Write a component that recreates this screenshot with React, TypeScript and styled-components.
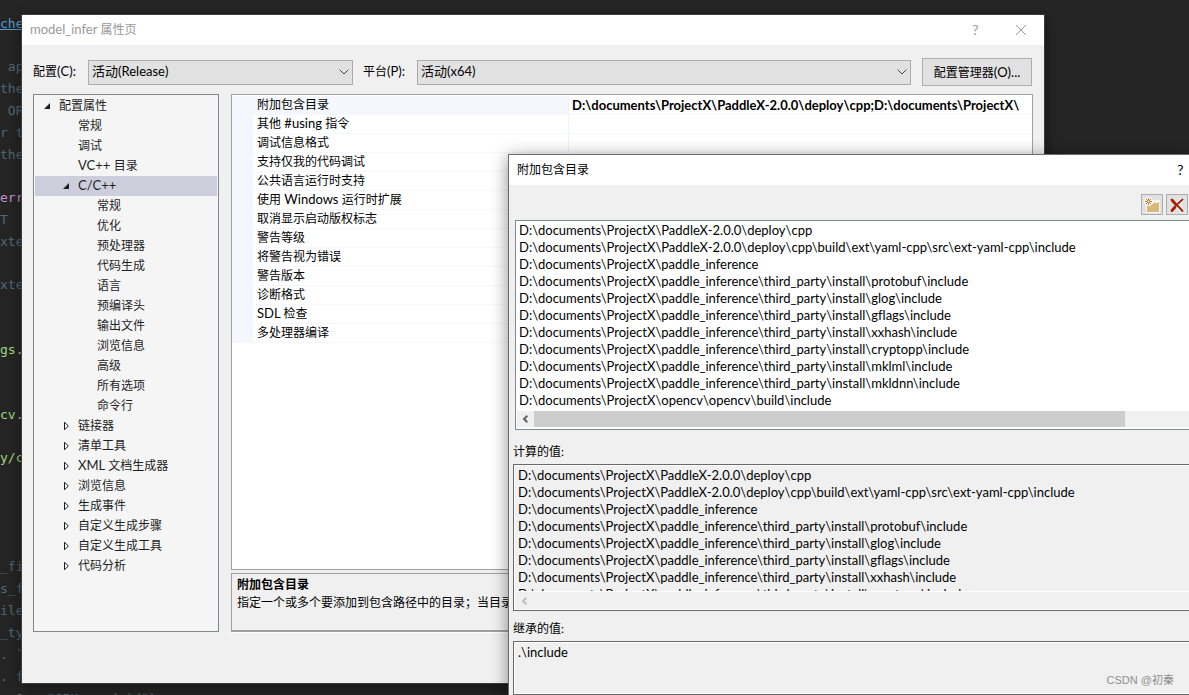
import React from 'react';
import styled, { createGlobalStyle } from 'styled-components';

const UI_FONT = 'Lato, "Noto Sans CJK SC", sans-serif';
const CODE_FONT = '"DejaVu Sans Mono", "Noto Sans CJK SC", monospace';

const GlobalStyle = createGlobalStyle`
  *, *::before, *::after { box-sizing: border-box; }
  body {
    margin: 0;
    background: #252525;
    color: #000;
    font: 12px/20px ${UI_FONT};
    font-variant-ligatures: none;
  }
  ul, h1, h2, p, pre { margin: 0; padding: 0; list-style: none; font-size: inherit; font-weight: inherit; }
  button, select { font-family: inherit; color: inherit; }
`;

/* ---------- desktop and code editor ---------- */

const Desktop = styled.main`
  position: relative;
  height: 100vh;
  overflow: hidden;
`;

const Editor = styled.pre`
  padding-top: 13px;
  font: 13px/22px ${CODE_FONT};
`;

type Tone = 'link' | 'comment' | 'keyword' | 'string';

const tones: Record<Tone, string> = {
  link: '#569cd6',
  comment: '#4f6a78',
  keyword: '#c594c5',
  string: '#a5d67f',
};

const CodeLine = styled.div<{ $tone: Tone }>`
  height: 22px;
  white-space: pre;
  color: ${(p) => tones[p.$tone]};
  text-decoration: ${(p) => (p.$tone === 'link' ? 'underline' : 'none')};
`;

const CodeGap = styled.div<{ $lines: number }>`
  height: ${(p) => p.$lines * 22 - 1}px;
`;

const code: Array<[Tone, string] | number> = [
  ['link', 'che'],
  1,
  ['comment', ' ap'],
  ['comment', 'the'],
  ['comment', ' OR'],
  ['comment', 'r t'],
  ['comment', 'the'],
  1,
  ['keyword', 'err'],
  ['comment', 'T'],
  ['comment', 'xte'],
  1,
  ['comment', 'xte'],
  2,
  ['string', 'gs.'],
  2,
  ['string', 'cv.'],
  1,
  ['string', 'y/c'],
  4,
  ['comment', '_fi'],
  ['comment', 's_f'],
  ['comment', 'ile'],
  ['comment', '_ty'],
  ['comment', '. `'],
  ['comment', '. f'],
  ['comment', '  0,  "GPU card id")'],
];

/* ---------- windows ---------- */

const Window = styled.section`
  position: absolute;
  display: flex;
  flex-direction: column;
  background: #f0f0f0;
`;

const PropertyWindow = styled(Window)`
  top: 15px;
  right: 145px;
  bottom: 12px;
  left: 22px;
  box-shadow: 0 0 0 1px #3c3c3c, 0 4px 14px rgba(0, 0, 0, 0.5);
`;

const IncludeWindow = styled(Window)`
  top: 154px;
  right: 0;
  bottom: 0;
  left: 508px;
  border: solid #6b6b6b;
  border-width: 1px 0 0 1px;
  box-shadow: 0 3px 16px rgba(0, 0, 0, 0.45);
`;

const TitleBar = styled.header<{ $inactive?: boolean }>`
  display: flex;
  align-items: center;
  flex: none;
  height: 30px;
  padding-left: 8px;
  background: #fff;
  color: ${(p) => (p.$inactive ? '#999' : '#000')};
`;

const Title = styled.h1`
  flex: 1;
`;

const CaptionButton = styled.button<{ $width: number }>`
  display: grid;
  place-items: center;
  width: ${(p) => p.$width}px;
  height: 28px;
  padding: 0;
  border: 0;
  background: none;
  color: inherit;
  font-size: 14px;
  line-height: 16px;
`;

const Latin = styled.span`
  font-size: 13px;
  line-height: 1;
`;

/* Latin runs are set one step larger than the Chinese glyphs beside them. */
function Mixed({ text }: { text: string }) {
  const parts = text.split(/([\u2e80-\uffff]+)/).filter(Boolean);
  return (
    <>
      {parts.map((part, i) =>
        /[\u2e80-\uffff]/.test(part) ? part : <Latin key={i}>{part}</Latin>,
      )}
    </>
  );
}

/* ---------- property pages ---------- */

const ConfigBar = styled.div`
  display: flex;
  align-items: center;
  padding: 13px 12px 8px 11px;
`;

const FieldLabel = styled.label<{ $width: number }>`
  flex: none;
  width: ${(p) => p.$width}px;
`;

const SelectBox = styled.div<{ $grow: number }>`
  display: grid;
  flex: ${(p) => p.$grow} 1 0;
  margin-right: 10px;

  > * { grid-area: 1 / 1; }
  > svg {
    align-self: center;
    justify-self: end;
    margin-right: 4px;
    pointer-events: none;
  }
`;

const Select = styled.select`
  width: 100%;
  height: 25px;
  padding: 0 20px 2px 3px;
  appearance: none;
  border: 1px solid #acacac;
  border-radius: 0;
  background: #e1e1e1;
  font-size: 13px;
`;

const PushButton = styled.button`
  flex: none;
  width: 110px;
  height: 28px;
  margin-left: 1px;
  padding: 0 0 2px;
  border: 1px solid #adadad;
  background: #e1e1e1;
  font-size: 12px;
`;

const Panels = styled.div`
  display: grid;
  flex: 1;
  grid-template-columns: 186px minmax(0, 1fr);
  gap: 12px;
  min-height: 0;
  padding: 0 11px 51px;
`;

const Tree = styled.ul`
  padding: 1px;
  border: 1px solid #828790;
  background: #f5f5f5;
  color: #1e1e1e;
`;

const TreeRow = styled.li<{ $level: number; $selected?: boolean }>`
  display: flex;
  align-items: center;
  height: 20px;
  padding-left: ${(p) => 8 + p.$level * 19}px;
  background: ${(p) => (p.$selected ? '#cccedb' : 'transparent')};
  white-space: pre;
`;

const Twisty = styled.svg`
  flex: none;
  width: 16px;
  height: 10px;
`;

const Details = styled.div`
  display: flex;
  flex-direction: column;
  gap: 3px;
  min-width: 0;
`;

const GridFrame = styled.div`
  flex: 1;
  padding-top: 1px;
  overflow: hidden;
  border: 1px solid #a0a0a0;
  background: #fff;
`;

const PropertyTable = styled.table`
  width: 100%;
  table-layout: fixed;
  border-collapse: separate;
  border-spacing: 0;
`;

const GutterCell = styled.td`
  width: 21px;
  padding: 0;
  background: #f4f7fc;
`;

const NameCell = styled.th<{ $selected: boolean }>`
  width: 316px;
  height: 19px;
  padding: 0 0 0 4px;
  border-right: 1px solid #f0f2f7;
  border-bottom: 1px solid #f4f7fc;
  background: ${(p) => (p.$selected ? '#f4f7fc' : '#fff')};
  font-weight: 400;
  line-height: 18px;
  text-align: left;
  white-space: pre;
`;

const ValueCell = styled.td`
  padding: 0 0 0 3px;
  overflow: hidden;
  border-bottom: 1px solid #f4f7fc;
  font-size: 13px;
  font-weight: 700;
  line-height: 18px;
  white-space: nowrap;
`;

const Description = styled.div`
  height: 59px;
  padding: 2px 5px;
  overflow: hidden;
  border: 1px solid #a0a0a0;
  border-bottom-width: 2px;
  box-shadow: 0 1px #fff;
  line-height: 18px;
  white-space: nowrap;
`;

const DescriptionTitle = styled.h2`
  font-weight: 700;
`;

/* ---------- include directories ---------- */

const Toolbar = styled.div`
  display: flex;
  justify-content: flex-end;
  gap: 3px;
  flex: none;
  padding: 9px 1px 5px;
`;

const ToolButton = styled.button`
  display: grid;
  place-items: center;
  width: 22px;
  height: 21px;
  padding: 0;
  border: 1px solid #adadad;
  background: #e1e1e1;
`;

const DirectoryList = styled.div`
  flex: none;
  margin-left: 6px;
  padding: 0 0 2px 1px;
  border: solid #828790;
  border-width: 1px 0 1px 1px;
  background: #fff;
`;

const ReadOnlyList = styled.div<{ $fill?: boolean }>`
  display: flex;
  flex: ${(p) => (p.$fill ? '1 0 0' : 'none')};
  flex-direction: column;
  height: ${(p) => (p.$fill ? 'auto' : '147px')};
  margin-left: 4px;
  padding: 1px 0 1px 2px;
  overflow: hidden;
  border: solid #696969;
  border-width: 1px 0 1px 1px;
  box-shadow: inset 1px 1px #fff, inset 0 -1px #fff;
`;

const Lines = styled.ul`
  flex: 1;
  min-height: 0;
  padding: 1px 0 2px 2px;
  overflow: hidden;
  font-size: 13px;
  line-height: 17px;
  white-space: nowrap;
`;

const ScrollBar = styled.div<{ $disabled?: boolean }>`
  display: flex;
  flex: none;
  height: ${(p) => (p.$disabled ? 18 : 16)}px;
  border-top: ${(p) => (p.$disabled ? '1px solid #fff' : '0')};
  background: #f0f0f0;
  color: ${(p) => (p.$disabled ? '#bfbfbf' : '#606060')};
`;

const ScrollArrow = styled.button`
  display: grid;
  place-items: center;
  width: 17px;
  padding: 0 2px 0 0;
  border: 0;
  background: none;
  color: inherit;
`;

const Thumb = styled.div`
  width: 88%;
  background: #cdcdcd;
`;

const Caption = styled.h2<{ $gap: number }>`
  flex: none;
  padding: ${(p) => p.$gap}px 4px 2px;
`;

const Watermark = styled.div`
  position: absolute;
  right: 15px;
  bottom: 5px;
  color: #8f8f8f;
  font: 11px/20px "Liberation Sans", "Noto Sans CJK SC", sans-serif;
`;

/* ---------- drawings ---------- */

const Chevron = () => (
  <svg width="10" height="6" viewBox="0 0 10 6" fill="none" stroke="#444" aria-hidden="true">
    <path d="M.6.6 5 5 9.4.6" />
  </svg>
);

const ScrollChevron = () => (
  <svg width="6" height="8" viewBox="0 0 6 8" fill="none" stroke="currentColor" strokeWidth="2" aria-hidden="true">
    <path d="M5.3.7 2 4l3.3 3.3" />
  </svg>
);

const CloseIcon = () => (
  <svg width="12" height="12" viewBox="0 0 12 12" fill="none" stroke="currentColor" aria-hidden="true">
    <path d="M1 1l10 10M11 1L1 11" />
  </svg>
);

const NewFolderIcon = () => (
  <svg width="16" height="16" viewBox="0 0 16 16" aria-hidden="true">
    <path d="M2 6h6l1-3h7v13H2z" fill="#f6f6f6" />
    <path d="M3 8v7h12V5h-4.500l-1 2H8L6.500 8z" fill="#dcb67a" />
    <path d="M11 5.500h3" stroke="#f6f6f6" />
    <circle cx="4.500" cy="4.500" r="4.500" fill="#f6f6f6" />
    <path d="M4.500 1v7M1 4.500h7M2 2l5 5M7 2L2 7" stroke="#c27d1a" fill="none" />
    <circle cx="4.500" cy="4.500" r="1" fill="#f6f6f6" />
  </svg>
);

const DeleteIcon = () => (
  <svg width="16" height="16" viewBox="0 0 16 16" fill="none" strokeLinecap="round" aria-hidden="true">
    <path d="M3 3l10.500 11M13 3C9 6 5 10 3 13.500" stroke="#f6f6f6" strokeWidth="4" />
    <path d="M3 3c3 3 7 7 10.500 11" stroke="#a1260d" strokeWidth="2" />
    <path d="M13.500 2.500C9 6 5.500 9.500 3 13.500" stroke="#a1260d" strokeWidth="2" />
    <path d="M3 3l3 3.500M6 10l-3 3.500" stroke="#a1260d" strokeWidth="3" />
  </svg>
);

/* ---------- data ---------- */

type Node = { text: string; level: number; state?: 'open' | 'closed'; selected?: boolean };

const leaf = (level: number) => (text: string): Node => ({ text, level });

const tree: Node[] = [
  { text: '配置属性', level: 0, state: 'open' },
  ...['常规', '调试', 'VC++ 目录'].map(leaf(1)),
  { text: 'C/C++', level: 1, state: 'open', selected: true },
  ...['常规', '优化', '预处理器', '代码生成', '语言', '预编译头', '输出文件', '浏览信息', '高级', '所有选项', '命令行'].map(leaf(2)),
  ...['链接器', '清单工具', 'XML 文档生成器', '浏览信息', '生成事件', '自定义生成步骤', '自定义生成工具', '代码分析'].map(
    (text): Node => ({ text, level: 1, state: 'closed' }),
  ),
];

const properties = [
  '附加包含目录',
  '其他 #using 指令',
  '调试信息格式',
  '支持仅我的代码调试',
  '公共语言运行时支持',
  '使用 Windows 运行时扩展',
  '取消显示启动版权标志',
  '警告等级',
  '将警告视为错误',
  '警告版本',
  '诊断格式',
  'SDL 检查',
  '多处理器编译',
];

const ROOT = 'D:\\documents\\ProjectX\\';
const THIRD_PARTY = ROOT + 'paddle_inference\\third_party\\install\\';

const directories = [
  ROOT + 'PaddleX-2.0.0\\deploy\\cpp',
  ROOT + 'PaddleX-2.0.0\\deploy\\cpp\\build\\ext\\yaml-cpp\\src\\ext-yaml-cpp\\include',
  ROOT + 'paddle_inference',
  ...['protobuf', 'glog', 'gflags', 'xxhash', 'cryptopp', 'mklml', 'mkldnn'].map(
    (name) => THIRD_PARTY + name + '\\include',
  ),
  ROOT + 'opencv\\opencv\\build\\include',
];

function TreeItem({ node }: { node: Node }) {
  return (
    <TreeRow
      role="treeitem"
      aria-level={node.level + 1}
      aria-selected={!!node.selected}
      $level={node.level}
      $selected={node.selected}
    >
      <Twisty viewBox="0 0 16 10" aria-hidden="true">
        {node.state === 'open' && <path d="M7 2v6H1z" fill="#1e1e1e" />}
        {node.state === 'closed' && <path d="M2.500 1.200v7.600L6.300 5z" fill="#fff" stroke="#1e1e1e" />}
      </Twisty>
      <span>
        <Mixed text={node.text} />
      </span>
    </TreeRow>
  );
}

function PropertyPages() {
  return (
    <PropertyWindow aria-label="model_infer 属性页">
      <TitleBar $inactive>
        <Title>
          <Mixed text="model_infer 属性页" />
        </Title>
        <CaptionButton $width={45} aria-label="帮助">?</CaptionButton>
        <CaptionButton $width={46} aria-label="关闭">
          <CloseIcon />
        </CaptionButton>
      </TitleBar>
      <ConfigBar>
        <FieldLabel htmlFor="configuration" $width={55}>
          <Mixed text="配置(C):" />
        </FieldLabel>
        <SelectBox $grow={265}>
          <Select id="configuration">
            <option>活动(Release)</option>
          </Select>
          <Chevron />
        </SelectBox>
        <FieldLabel htmlFor="platform" $width={54}>
          <Mixed text="平台(P):" />
        </FieldLabel>
        <SelectBox $grow={494}>
          <Select id="platform">
            <option>活动(x64)</option>
          </Select>
          <Chevron />
        </SelectBox>
        <PushButton>
          <Mixed text="配置管理器(O)..." />
        </PushButton>
      </ConfigBar>
      <Panels>
        <Tree role="tree" aria-label="配置属性">
          {tree.map((node, i) => (
            <TreeItem key={i} node={node} />
          ))}
        </Tree>
        <Details>
          <GridFrame>
            <PropertyTable>
              <tbody>
                {properties.map((name, i) => (
                  <tr key={name}>
                    <GutterCell />
                    <NameCell scope="row" $selected={i === 0}>
                      <Mixed text={name} />
                    </NameCell>
                    <ValueCell>{i === 0 && `${directories[0]};${ROOT}`}</ValueCell>
                  </tr>
                ))}
              </tbody>
            </PropertyTable>
          </GridFrame>
          <Description>
            <DescriptionTitle>附加包含目录</DescriptionTitle>
            <p>指定一个或多个要添加到包含路径中的目录；当目录</p>
          </Description>
        </Details>
      </Panels>
    </PropertyWindow>
  );
}

function DirectoryLines({ items, label }: { items: string[]; label: string }) {
  return (
    <Lines aria-label={label}>
      {items.map((item) => (
        <li key={item}>{item}</li>
      ))}
    </Lines>
  );
}

function IncludeDirectories() {
  return (
    <IncludeWindow aria-label="附加包含目录">
      <TitleBar>
        <Title>附加包含目录</Title>
        <CaptionButton $width={17} aria-label="帮助">?</CaptionButton>
      </TitleBar>
      <Toolbar>
        <ToolButton aria-label="新行">
          <NewFolderIcon />
        </ToolButton>
        <ToolButton aria-label="删除">
          <DeleteIcon />
        </ToolButton>
      </Toolbar>
      <DirectoryList>
        <DirectoryLines items={directories} label="附加包含目录" />
        <ScrollBar>
          <ScrollArrow aria-label="向左滚动">
            <ScrollChevron />
          </ScrollArrow>
          <Thumb />
        </ScrollBar>
      </DirectoryList>
      <Caption $gap={12}>计算的值:</Caption>
      <ReadOnlyList>
        <DirectoryLines items={directories.slice(0, 8)} label="计算的值" />
        <ScrollBar $disabled>
          <ScrollArrow disabled aria-label="向左滚动">
            <ScrollChevron />
          </ScrollArrow>
        </ScrollBar>
      </ReadOnlyList>
      <Caption $gap={8}>继承的值:</Caption>
      <ReadOnlyList $fill>
        <DirectoryLines items={['.\\include']} label="继承的值" />
      </ReadOnlyList>
    </IncludeWindow>
  );
}

export default function App() {
  return (
    <>
      <GlobalStyle />
      <Desktop>
        <Editor>
          {code.map((line, i) =>
            typeof line === 'number' ? (
              <CodeGap key={i} $lines={line} />
            ) : (
              <CodeLine key={i} $tone={line[0]}>
                {line[1]}
              </CodeLine>
            ),
          )}
        </Editor>
        <PropertyPages />
        <IncludeDirectories />
        <Watermark>CSDN @初秦</Watermark>
      </Desktop>
    </>
  );
}
